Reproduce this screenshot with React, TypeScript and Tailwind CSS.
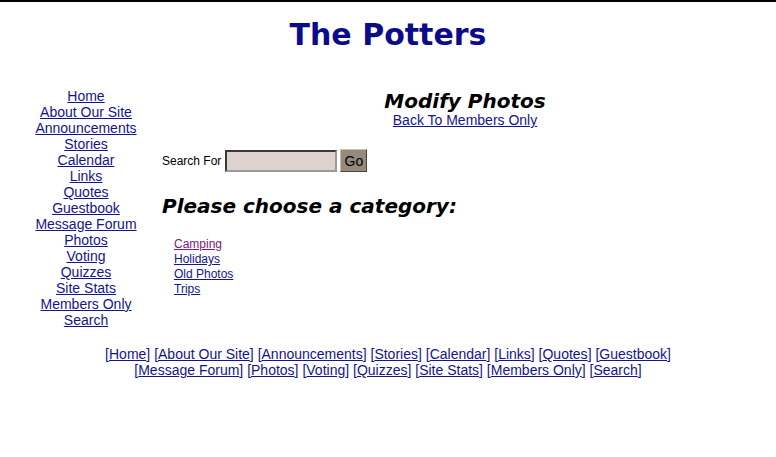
import React from "react";

const navLinks = [
  "Home",
  "About Our Site",
  "Announcements",
  "Stories",
  "Calendar",
  "Links",
  "Quotes",
  "Guestbook",
  "Message Forum",
  "Photos",
  "Voting",
  "Quizzes",
  "Site Stats",
  "Members Only",
  "Search",
];

const categories = [
  { label: "Camping", visited: true },
  { label: "Holidays", visited: false },
  { label: "Old Photos", visited: false },
  { label: "Trips", visited: false },
];

const sans = "font-['Liberation_Sans',Arial,sans-serif]";
const heading = "font-['DejaVu_Sans',Verdana,sans-serif] font-bold";

export default function App() {
  return (
    <div className={`min-h-[457px] w-[776px] bg-white text-[#14148c] ${sans}`}>
      {/* top rule */}
      <div className="h-[2px] w-full bg-black" />

      {/* Title */}
      <h1
        className={`${heading} mt-[15px] text-center text-[30px] leading-[36px] text-[#0c0c8a]`}
      >
        The Potters
      </h1>

      <div className="mt-[35px] flex">
        {/* Side nav */}
        <nav className="ml-[10px] flex w-[152px] flex-col items-center text-[14px] leading-[16px]">
          {navLinks.map((label) => (
            <a key={label} href="#" className="underline">
              {label}
            </a>
          ))}
        </nav>

        {/* Main */}
        <main className="w-[606px]">
          <div className="mt-[2px] flex flex-col items-center">
            <h2
              className={`${heading} text-[20px] italic leading-[22px] text-black`}
            >
              Modify Photos
            </h2>
            <a href="#" className="text-[14px] leading-[16px] underline">
              Back To Members Only
            </a>
          </div>

          <form className="mt-[21px] flex items-center">
            <span className="text-[12px] leading-[14px] text-black">
              Search For
            </span>
            <input
              type="text"
              className="ml-[4px] h-[22px] w-[112px] border-2 border-t-[#3a3a3a] border-l-[#3a3a3a] border-b-[#9a9a9a] border-r-[#9a9a9a] bg-[#ddd2ce]"
            />
            <button
              type="button"
              className="ml-[3px] h-[23px] w-[27px] border border-t-[#c8c0b4] border-l-[#c8c0b4] border-b-[#4a443c] border-r-[#4a443c] bg-[#958a7c] text-[14px] leading-[16px] text-black"
            >
              Go
            </button>
          </form>

          <h3
            className={`${heading} mt-[22px] text-[20px] italic leading-[24px] text-black`}
          >
            Please choose a category:
          </h3>

          <ul className="ml-[12px] mt-[19px] flex flex-col items-start text-[12px] leading-[15px]">
            {categories.map((c) => (
              <li key={c.label}>
                <a
                  href="#"
                  className={
                    c.visited ? "text-[#7a1a7a] underline" : "underline"
                  }
                >
                  {c.label}
                </a>
              </li>
            ))}
          </ul>
        </main>
      </div>

      {/* Footer links */}
      <footer className="mx-auto mt-[18px] w-[600px] text-center text-[14px] leading-[16px]">
        {navLinks.map((label, i) => (
          <React.Fragment key={label}>
            [<a href="#" className="underline">{label}</a>]
            {i === 7 ? <br /> : i < navLinks.length - 1 ? " " : null}
          </React.Fragment>
        ))}
      </footer>
    </div>
  );
}
